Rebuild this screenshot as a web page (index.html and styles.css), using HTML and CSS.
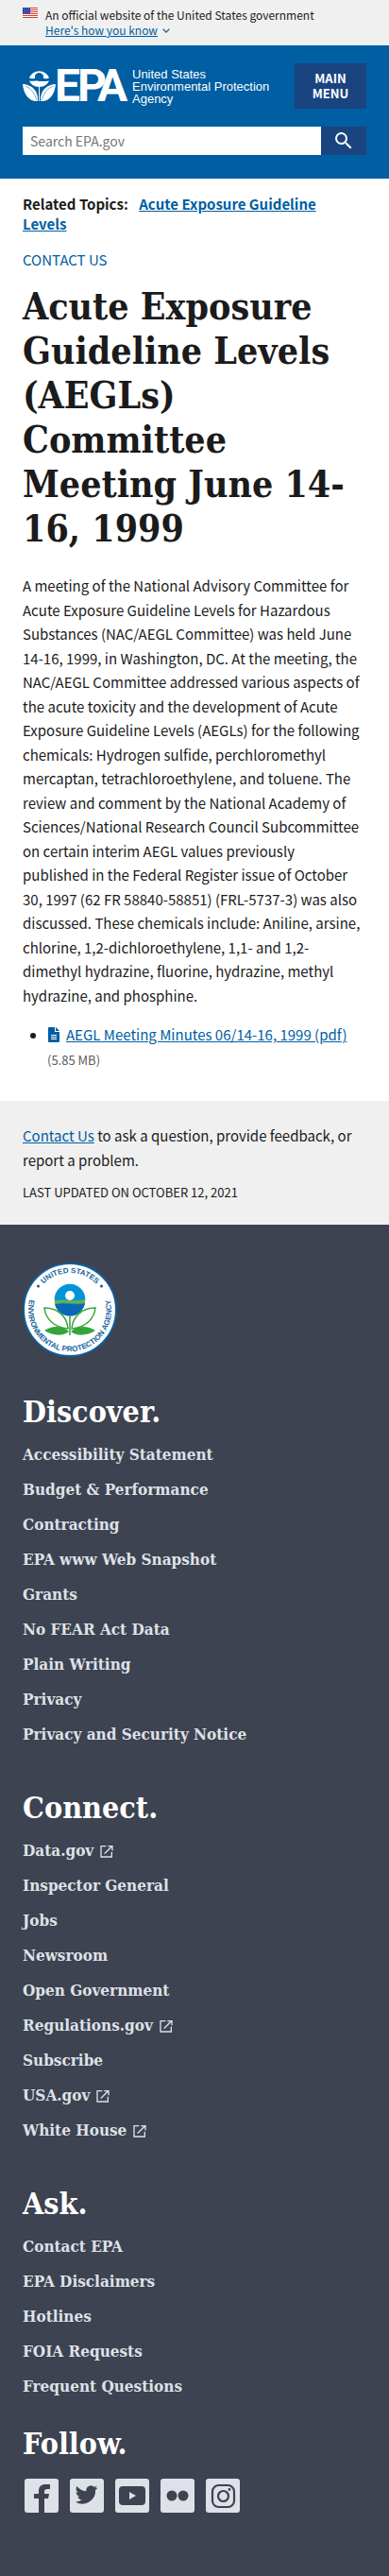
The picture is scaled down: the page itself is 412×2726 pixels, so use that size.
FILE: index.html
```html
<!DOCTYPE html>
<html lang="en">
<head>
<meta charset="utf-8">
<meta name="viewport" content="width=device-width, initial-scale=1">
<title>Acute Exposure Guideline Levels (AEGLs) Committee Meeting June 14-16, 1999 | US EPA</title>
<link rel="stylesheet" href="styles.css">
</head>
<body>
<svg width="0" height="0" class="defs" aria-hidden="true">
  <symbol id="external" viewBox="0 0 24 24"><path fill="currentColor" d="M19 20H4V5h7V3H2v19h19v-9h-2zM14 3v2h4L8 15l1 2L20 6v5h2V3z"/></symbol>
</svg>

<section class="banner" aria-label="Official government website">
  <svg class="flag" viewBox="0 0 16 11" aria-hidden="true">
    <path fill="#fff" d="M0 0h16v11H0z"/>
    <path stroke="#d33b35" stroke-width="1" d="M0 .5h16M0 2.5h16M0 4.5h16M0 6.5h16M0 8.5h16M0 10.5h16"/>
    <path fill="#2a3aa5" d="M0 0h8v6.500H0z"/>
    <g fill="#fff"><circle cx="1.500" cy="1.300" r=".45"/><circle cx="4" cy="1.300" r=".45"/><circle cx="6.500" cy="1.300" r=".45"/><circle cx="2.700" cy="3.200" r=".45"/><circle cx="5.300" cy="3.200" r=".45"/><circle cx="1.500" cy="5.100" r=".45"/><circle cx="4" cy="5.100" r=".45"/><circle cx="6.500" cy="5.100" r=".45"/></g>
  </svg>
  <div class="banner-text">
    <p>An official website of the United States government</p>
    <button type="button" class="banner-button"><span>Here's how you know</span><svg viewBox="0 0 8 5" aria-hidden="true"><path d="M.7.8 4 4 7.300.8" fill="none" stroke="#3b6280" stroke-width="1.300"/></svg></button>
  </div>
</section>

<header class="header">
  <div class="header-top">
    <a class="logo" href="#" aria-label="United States Environmental Protection Agency">
      <svg class="mark" viewBox="0 0 112 36" aria-hidden="true">
        <g fill="#fff">
          <path d="M7 10.500A11 10.500 0 0 1 28 10.500C25 12 24 10.500 22 11A4.700 4.700 0 1 0 13 11C11 10.500 10 12 7 10.500z"/>
          <path d="M7 13.500C10 14.500 12 13 15 13.500S23 14.500 28 13.500A11 10 0 0 1 17.500 20 11 10 0 0 1 7 13.500z"/>
          <path d="M0 17C8 17 17 23 16 35 7 36 1 28 0 17z"/>
          <path d="M35 17C27 17 18 23 19 35 28 36 34 28 35 17z"/>
          <path d="M17 20h1v15h-1z"/>
          <g class="epa"><text x="34" y="35">E</text><text x="58" y="35">P</text><text x="79" y="35">A</text></g>
        </g>
        <path d="M3 19Q12 23 15 34M32 19Q23 23 20 34" fill="none" stroke="#005ea2" stroke-width=".5"/>
      </svg>
      <span class="tagline">United States<br>Environmental Protection<br>Agency</span>
    </a>
    <button type="button" class="menu">MAIN MENU</button>
  </div>
  <form class="search" role="search">
    <input type="search" aria-label="Search EPA.gov" placeholder="Search EPA.gov">
    <button type="button" aria-label="Search"><svg viewBox="0 0 24 24" aria-hidden="true"><path fill="#fff" d="M15.500 14h-.79l-.28-.27A6.470 6.470 0 0 0 16 9.500 6.500 6.500 0 1 0 9.500 16c1.610 0 3.090-.59 4.230-1.570l.27.28v.79l5 4.990L20.490 19l-4.990-5zm-6 0C7.010 14 5 11.990 5 9.500S7.010 5 9.500 5 14 7.010 14 9.500 11.990 14 9.500 14z"/></svg></button>
  </form>
</header>

<main class="main">
  <p class="related">Related Topics: <a href="#">Acute Exposure Guideline<br>Levels</a></p>
  <p class="contact"><a href="#">CONTACT US</a></p>
  <h1>Acute Exposure Guideline Levels (AEGLs)<br>Committee Meeting June 14-<br>16, 1999</h1>
  <p>A meeting of the National Advisory Committee for Acute Exposure Guideline Levels for Hazardous Substances (NAC/AEGL Committee) was held June 14-16, 1999, in Washington, DC. At the meeting, the NAC/AEGL Committee addressed various aspects of the acute toxicity and the development of Acute Exposure Guideline Levels (AEGLs) for the following chemicals: Hydrogen sulfide, perchloromethyl mercaptan, tetrachloroethylene, and toluene. The review and comment by the National Academy of Sciences/National Research Council Subcommittee on certain interim AEGL values previously<br>published in the Federal Register issue of October 30, 1997 (62 FR 58840-58851) (FRL-5737-3) was also discussed. These chemicals include: Aniline, arsine, chlorine, 1,2-dichloroethylene, 1,1- and 1,2-<wbr>dimethyl hydrazine, fluorine, hydrazine, methyl hydrazine, and phosphine.</p>
  <ul class="files">
    <li><svg viewBox="0 0 12 16" aria-hidden="true"><path fill="#005ea2" d="M1 0h6v5h5v10a1 1 0 0 1-1 1H1a1 1 0 0 1-1-1V1a1 1 0 0 1 1-1zM8 0l4 4H8z"/><path stroke="#fff" d="M3 8.500h6M3 10.500h6M3 12.500h6"/></svg><a href="#">AEGL Meeting Minutes 06/14-16, 1999 (pdf)</a> <span class="size">(5.85 MB)</span></li>
  </ul>
</main>

<section class="feedback">
  <p><a href="#">Contact Us</a> to ask a question, provide feedback, or report a problem.</p>
  <p class="updated">LAST UPDATED ON OCTOBER 12, 2021</p>
</section>

<footer class="footer">
  <svg class="seal" viewBox="0 0 100 100" role="img" aria-label="United States Environmental Protection Agency">
    <circle cx="50" cy="50" r="49" fill="#fff" stroke="#0e5f9e" stroke-width="2"/>
    <path id="arc-top" d="M11 50A39 39 0 0 1 89 50" fill="none"/>
    <path id="arc-bottom" d="M17 21A44 44 0 1 0 83 21" fill="none"/>
    <text class="seal-top"><textPath href="#arc-top" startOffset="50%">UNITED STATES</textPath></text>
    <text class="seal-bottom"><textPath href="#arc-bottom" startOffset="50%">ENVIRONMENTAL PROTECTION AGENCY</textPath></text>
    <circle cx="16.500" cy="25" r="1.600" fill="#17649f"/><circle cx="83.500" cy="25" r="1.600" fill="#17649f"/>
    <circle cx="50" cy="39" r="16.300" fill="#0094d9"/>
    <path fill="#0b68b4" d="M34 44q8-1 16 0t16-1a16.300 16.300 0 0 1-32 1z"/>
    <path fill="#6fae45" d="M34 40q8-1 16 0t16-1v4q-8 1-16 0t-16 1z"/>
    <circle cx="50" cy="35" r="5" fill="#fff"/>
    <path d="M50 57v20M48 70C47 57 37 48 23 48c1 11 10 21 25 22zM52 70c1-13 11-22 25-22-1 11-10 21-25 22z" fill="none" stroke="#3ba43b" stroke-width="1.500"/>
    <path fill="#34a53c" d="M49 73c-7-6-17-7-26-1 8 5 19 7 26 1zM51 73c7-6 17-7 26-1-8 5-19 7-26 1z"/>
  </svg>
  <nav class="group first" aria-labelledby="discover">
    <h2 id="discover">Discover.</h2>
    <ul>
      <li><a href="#">Accessibility Statement</a></li>
      <li><a href="#">Budget &amp; Performance</a></li>
      <li><a href="#">Contracting</a></li>
      <li><a href="#">EPA www Web Snapshot</a></li>
      <li><a href="#">Grants</a></li>
      <li><a href="#">No FEAR Act Data</a></li>
      <li><a href="#">Plain Writing</a></li>
      <li><a href="#">Privacy</a></li>
      <li><a href="#">Privacy and Security Notice</a></li>
    </ul>
  </nav>
  <nav class="group" aria-labelledby="connect">
    <h2 id="connect">Connect.</h2>
    <ul>
      <li><a href="#">Data.gov<svg aria-hidden="true"><use href="#external"/></svg></a></li>
      <li><a href="#">Inspector General</a></li>
      <li><a href="#">Jobs</a></li>
      <li><a href="#">Newsroom</a></li>
      <li><a href="#">Open Government</a></li>
      <li><a href="#">Regulations.gov<svg aria-hidden="true"><use href="#external"/></svg></a></li>
      <li><a href="#">Subscribe</a></li>
      <li><a href="#">USA.gov<svg aria-hidden="true"><use href="#external"/></svg></a></li>
      <li><a href="#">White House<svg aria-hidden="true"><use href="#external"/></svg></a></li>
    </ul>
  </nav>
  <nav class="group" aria-labelledby="ask">
    <h2 id="ask">Ask.</h2>
    <ul>
      <li><a href="#">Contact EPA</a></li>
      <li><a href="#">EPA Disclaimers</a></li>
      <li><a href="#">Hotlines</a></li>
      <li><a href="#">FOIA Requests</a></li>
      <li><a href="#">Frequent Questions</a></li>
    </ul>
  </nav>
  <section class="follow" aria-labelledby="follow">
    <h2 id="follow">Follow.</h2>
    <div class="social">
      <a href="#" aria-label="Facebook"><svg viewBox="0 0 36 36"><path fill="#3d4350" d="M15 36V21h-5v-5h5v-3c0-5 3-7 7-7h5v5h-3c-2 0-3 1-3 2v3h5l-1 5h-4v15z"/></svg></a>
      <a href="#" aria-label="Twitter"><svg viewBox="0 0 36 36"><path fill="#3d4350" transform="translate(5 5)" d="M24.500 4.500a9.500 9.500 0 0 1-2.800.8 4.900 4.900 0 0 0 2.100-2.700 9.500 9.500 0 0 1-3.100 1.200 4.900 4.900 0 0 0-8.300 4.400A13.800 13.800 0 0 1 2.400 3.100a4.900 4.900 0 0 0 1.500 6.500 4.700 4.700 0 0 1-2.200-.6 4.900 4.900 0 0 0 3.900 4.800 4.900 4.900 0 0 1-2.200.1 4.900 4.900 0 0 0 4.500 3.400A9.800 9.800 0 0 1 .8 19.400a13.800 13.800 0 0 0 21.300-12.300 9.800 9.800 0 0 0 2.400-2.600z"/></svg></a>
      <a href="#" aria-label="YouTube"><svg viewBox="0 0 36 36"><rect x="4" y="8" width="28" height="20" rx="4" fill="#3d4350"/><path fill="#dfe1e8" d="M15 14l7 4-7 4z"/></svg></a>
      <a href="#" aria-label="Flickr"><svg viewBox="0 0 36 36" fill="#3d4350"><circle cx="12" cy="18" r="5.500"/><circle cx="24" cy="18" r="5.500"/></svg></a>
      <a href="#" aria-label="Instagram"><svg viewBox="0 0 36 36" fill="none" stroke="#3d4350" stroke-width="2.200"><rect x="7" y="7" width="23" height="23" rx="6.500"/><circle cx="18.500" cy="18.500" r="5.500"/><circle cx="25" cy="11.500" r="1.400" fill="#3d4350" stroke="none"/></svg></a>
    </div>
  </section>
</footer>
</body>
</html>
```
FILE: styles.css
```css
* { box-sizing: border-box; }

body {
  margin: 0;
  background: #fff;
  color: #1b1b1b;
  font-family: "Noto Sans CJK SC", "Open Sans", sans-serif;
  font-size: 15px;
  line-height: 1.7;
}

p, h1, h2, ul { margin: 0; padding: 0; }
a { color: #005ea2; }
button { font-family: inherit; cursor: pointer; }
.defs { position: absolute; }

.banner {
  display: flex;
  gap: 8px;
  padding: 8px 24px;
  background: #f0f0f0;
  font-size: 12px;
  line-height: 16px;
}
.flag { width: 16px; height: 11px; flex: none; }
.banner-button {
  display: flex;
  align-items: center;
  gap: 5px;
  padding: 0;
  border: 0;
  background: none;
  color: #005ea2;
  font-size: 12px;
  line-height: 16px;
}
.banner-button span { text-decoration: underline; }
.banner-button svg { width: 8px; height: 5px; }

.header { padding: 19px 24px 25px; background: #005ea2; }
.header-top { display: flex; justify-content: space-between; gap: 8px; }
.logo {
  display: flex;
  gap: 4px;
  padding-top: 5px;
  color: #fff;
  text-decoration: none;
}
.mark { width: 112px; height: 36px; flex: none; overflow: visible; }
.epa { font-family: Roboto, sans-serif; font-size: 48px; font-weight: 700; }
.tagline {
  font-family: "Liberation Sans", Arial, sans-serif;
  font-size: 13px;
  line-height: 13px;
  white-space: nowrap;
}
.menu {
  width: 76px;
  height: 48px;
  padding: 0 12px;
  border: 0;
  background: #1a4480;
  color: #fff;
  font-size: 13px;
  font-weight: 700;
  line-height: 16px;
}
.search { display: flex; margin-top: 19px; }
.search input {
  flex: 1;
  min-width: 0;
  height: 30px;
  padding: 0 8px;
  border: 0;
  border-radius: 0;
  background: #fff;
  font-family: inherit;
  font-size: 14px;
}
.search input::placeholder { color: #757575; }
.search button {
  display: grid;
  place-items: center;
  width: 48px;
  padding: 0;
  border: 0;
  background: #1a4480;
}
.search button svg { width: 24px; height: 24px; }

.main { padding: 16px 24px 32px; }
.related { font-weight: 700; line-height: 21px; }
.related a { margin-left: 8px; }
.contact { margin-top: 16px; line-height: 24px; }
.contact a { text-decoration: none; }
h1, h2, .group { font-family: "DejaVu Serif Condensed", "DejaVu Serif", serif; }
h1 {
  margin: 14px 0 24px;
  font-size: 39px;
  font-weight: 700;
  line-height: 47px;
}
.files { margin-top: 16px; padding-left: 26px; }
.files svg { width: 12px; height: 16px; margin: 0 7px 0 1px; vertical-align: -2px; }
.size { color: #5c5c5c; font-size: 13px; }

.feedback { padding: 24px; background: #f0f0f0; }
.updated { margin-top: 12px; font-size: 13px; line-height: 20px; }

.footer { padding: 40px 24px 67px; background: #3d4350; color: #fff; }
.seal { display: block; width: 100px; height: 100px; }
.seal text {
  fill: #17649f;
  font-family: "Liberation Sans", Arial, sans-serif;
  font-weight: 700;
  text-anchor: middle;
}
.seal-top { font-size: 8px; }
.seal-bottom { font-size: 8px; }
h2 { font-size: 32px; line-height: 36px; }
.group { margin-top: 49px; font-size: 17px; font-weight: 700; line-height: 21px; }
.group.first { margin-top: 40px; }
.group ul {
  display: grid;
  gap: 16px;
  margin-top: 17px;
  list-style: none;
}
.group li { height: 21px; }
.group a { color: #dfe1e8; text-decoration: none; }
.group svg { width: 16px; height: 16px; margin-left: 6px; vertical-align: -3px; }
.follow { margin-top: 32px; }
.social { display: flex; gap: 12px; margin: 19px 2px 0; }
.social a { width: 36px; height: 36px; border-radius: 3px; background: #dfe1e8; }
.social svg { display: block; width: 36px; height: 36px; }
```
